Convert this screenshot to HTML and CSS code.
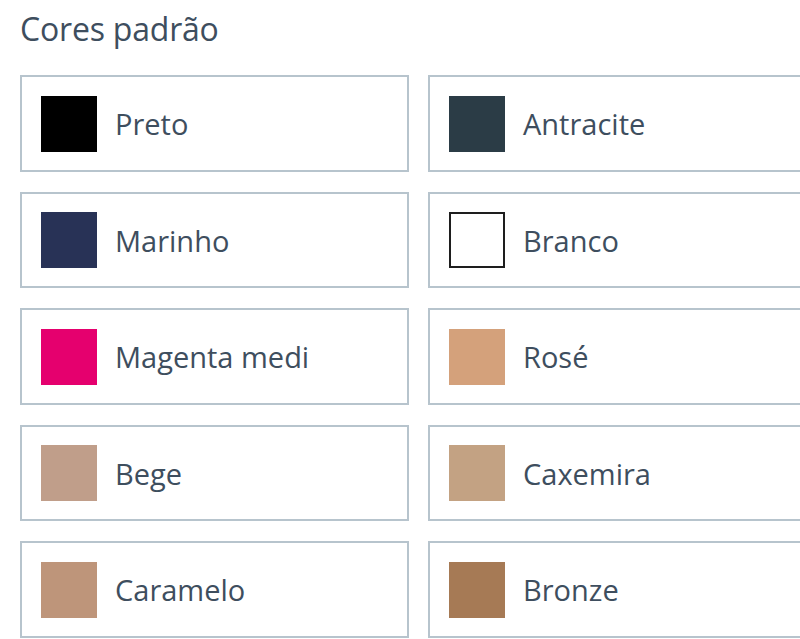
FILE: index.html
```
<!DOCTYPE html>
<html lang="pt">
<head>
<meta charset="utf-8">
<title>Cores padrão</title>
<link rel="stylesheet" href="styles.css">
</head>
<body>
<div class="page">
  <h2 class="title">Cores padrão</h2>
  <div class="grid">
    <div class="card"><span class="swatch sw-preto"></span><span class="label">Preto</span></div>
    <div class="card"><span class="swatch sw-antracite"></span><span class="label">Antracite</span></div>
    <div class="card"><span class="swatch sw-marinho"></span><span class="label">Marinho</span></div>
    <div class="card"><span class="swatch sw-branco"></span><span class="label">Branco</span></div>
    <div class="card"><span class="swatch sw-magenta"></span><span class="label">Magenta medi</span></div>
    <div class="card"><span class="swatch sw-rose"></span><span class="label">Rosé</span></div>
    <div class="card"><span class="swatch sw-bege"></span><span class="label">Bege</span></div>
    <div class="card"><span class="swatch sw-caxemira"></span><span class="label">Caxemira</span></div>
    <div class="card"><span class="swatch sw-caramelo"></span><span class="label">Caramelo</span></div>
    <div class="card"><span class="swatch sw-bronze"></span><span class="label">Bronze</span></div>
  </div>
</div>
</body>
</html>
```
FILE: styles.css
```
html, body {
  margin: 0;
  padding: 0;
  background: #ffffff;
  overflow: hidden;
}
body {
  font-family: "Open Sans", "Noto Sans", sans-serif;
  color: #3e4e5e;
}
.page {
  width: 800px;
  padding: 0 0 0 20px;
}
.title {
  margin: 0;
  padding-top: 7px;
  height: 75px;
  box-sizing: border-box;
  font-size: 32px;
  font-weight: 400;
  line-height: 44px;
  letter-spacing: -0.2px;
}
.grid {
  display: grid;
  grid-template-columns: 389px 389px;
  column-gap: 19px;
  row-gap: 20px;
}
.card {
  box-sizing: border-box;
  height: 96.5px;
  border: 2px solid #b7c4cd;
  display: flex;
  align-items: center;
  padding-left: 19px;
  gap: 18px;
  overflow: hidden;
}
.swatch {
  flex: none;
  width: 56px;
  height: 56px;
  box-sizing: border-box;
  margin-top: 1px;
}
.label {
  font-size: 29px;
  line-height: 40px;
  white-space: nowrap;
  padding-top: 2px;
}
.sw-preto { background: #000000; }
.sw-antracite { background: #2b3c46; }
.sw-marinho { background: #283256; }
.sw-branco { background: #ffffff; border: 2px solid #1e1e1e; }
.sw-magenta { background: #e5006e; }
.sw-rose { background: #d4a17b; }
.sw-bege { background: #c09e8a; }
.sw-caxemira { background: #c3a283; }
.sw-caramelo { background: #be957a; }
.sw-bronze { background: #a67a55; }
```
